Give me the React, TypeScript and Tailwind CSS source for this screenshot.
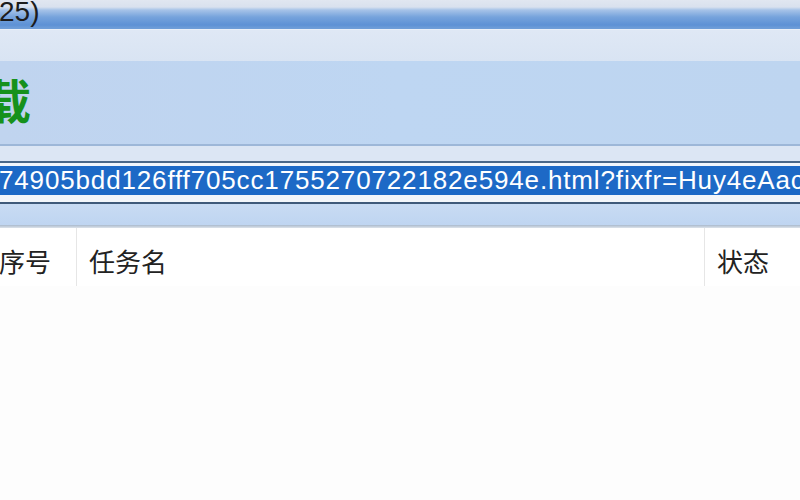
export default function App() {
  const url =
    '74905bdd126fff705cc1755270722182e594e.html?fixfr=Huy4eAac';

  return (
    <div className="w-[800px] h-[500px] overflow-hidden bg-[#fdfdfd] font-['Liberation_Sans','Noto_Sans_CJK_SC',sans-serif]">
      {/* title strip */}
      <div className="h-[31px] bg-[linear-gradient(to_bottom,#e3e8f1_0px,#d9e1ee_9px,#a6c3e8_12px,#76a3dc_19px,#5d91d5_27px,#6e9dd8_30px)]">
        <div className="-mt-[2px] -ml-[1px] text-[28px] leading-[27px] text-[#1c1c1c]">25)</div>
      </div>

      {/* toolbar panel */}
      <div className="h-[1px] bg-[#e9eff8]" />
      <div className="h-[31px] bg-[linear-gradient(to_bottom,#dfe8f5,#d9e4f3)]" />
      <div className="h-[83px] flex items-center pb-[8px] bg-[linear-gradient(to_right,#c0d4ef,#bed6f2_50%,#bed5f0)]">
        <span className="-ml-[16px] text-[47px] leading-none font-bold text-[#16911c] font-['Noto_Sans_CJK_SC',sans-serif]">
          载
        </span>
      </div>
      <div className="h-[2px] bg-[#9db7d8]" />
      <div className="h-[15px] bg-[#dce6f4]" />

      {/* url field */}
      <div className="h-[2px] bg-[#4a6788]" />
      <div className="h-[3px] bg-[#f2f6fb]" />
      <div className="h-[29px] bg-[#1d69c6] overflow-hidden whitespace-nowrap">
        <span className="block -ml-[1px] text-[26px] leading-[29px] tracking-[0.85px] text-white">{url}</span>
      </div>
      <div className="h-[7px] bg-[#f3f6fa]" />
      <div className="h-[2px] bg-[#3f5a7a]" />
      <div className="h-[21px] bg-[linear-gradient(to_bottom,#c8dbf3,#bfd5f1)]" />
      <div className="h-[3px] bg-[linear-gradient(to_bottom,#a9b9cc,#dde3ea)]" />

      {/* list header */}
      <div className="flex h-[58px] bg-white text-[26px] text-[#222] font-['Noto_Sans_CJK_SC',sans-serif]">
        <div className="w-[77px] flex items-center pt-[7px] border-r border-[#e6e6e6] whitespace-nowrap">
          <span className="-ml-[1px]">序号</span>
        </div>
        <div className="w-[628px] flex items-center pt-[7px] pl-[12px] border-r border-[#e6e6e6]">
          任务名
        </div>
        <div className="flex-1 flex items-center pt-[7px] pl-[12px]">状态</div>
      </div>
    </div>
  );
}
